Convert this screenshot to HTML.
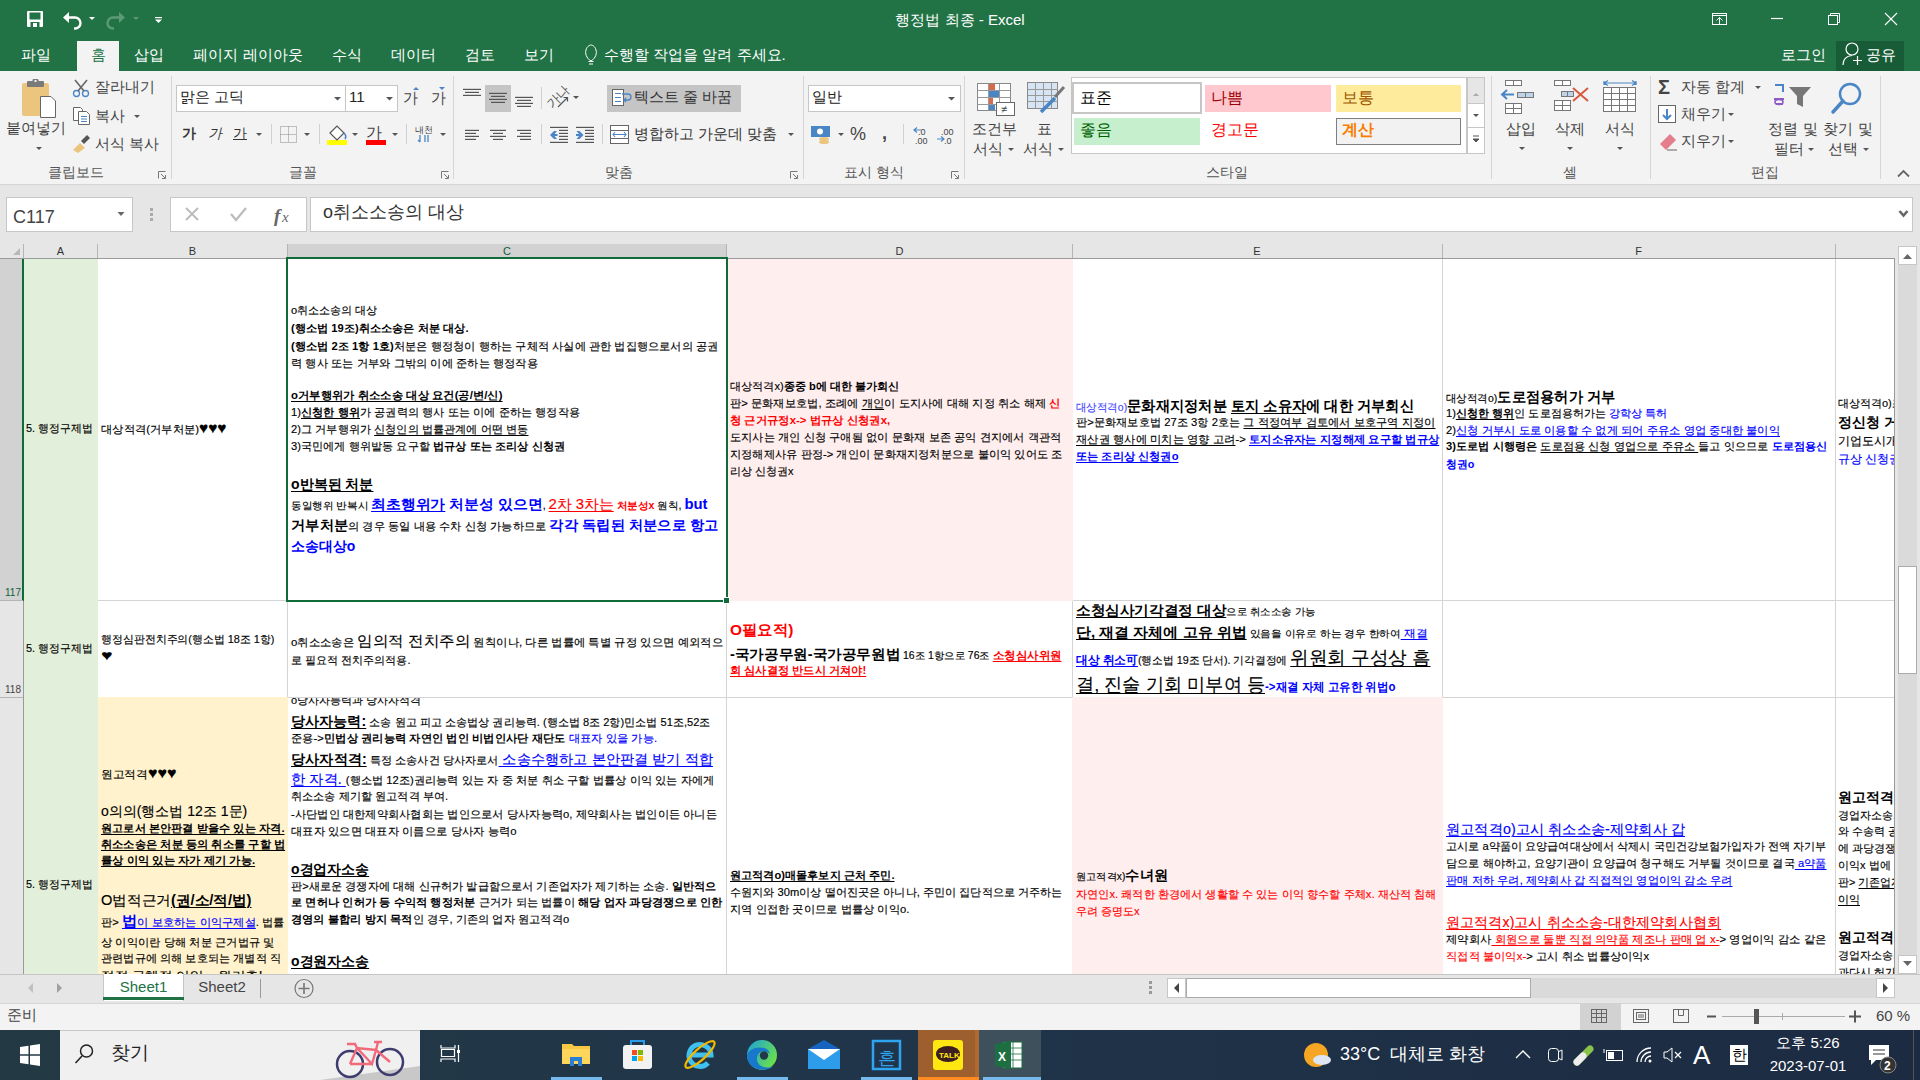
<!DOCTYPE html><html><head><meta charset="utf-8"><style>
*{box-sizing:border-box;margin:0;padding:0}
html,body{width:1920px;height:1080px;overflow:hidden;background:#fff;font-family:"Liberation Sans",sans-serif;color:#000}
.a{position:absolute}
.nw{white-space:nowrap}
.u{text-decoration:underline;text-decoration-thickness:1px;text-underline-offset:2px}
.b{font-weight:bold}
.bl{color:#0000FF}
.rd{color:#FF0000}
svg.i{position:absolute;overflow:visible}
.ln{position:absolute;white-space:nowrap;transform-origin:0 0;-webkit-text-stroke:0.15px currentColor}
.ln .b{-webkit-text-stroke:0}
</style></head><body>
<div class="a" style="left:0px;top:0px;width:1920px;height:71px;background:#217346"></div>
<svg class="i" style="left:0;top:0" width="200" height="40"><rect x="27" y="11" width="16" height="16" rx="1" fill="#fff"/><rect x="29.5" y="12.5" width="11" height="7" fill="#217346"/><rect x="30.5" y="22" width="9" height="5" fill="#217346"/><rect x="33" y="23" width="4" height="4" fill="#fff"/><path d="M66 17.5 H75 A5.5 5.5 0 0 1 75 28.5 H74" fill="none" stroke="#fff" stroke-width="2.4"/><path d="M63 17.5 L69 12 L69 23 Z" fill="#fff"/><path d="M89 17 L95 17 L92 20 Z" fill="#fff"/><path d="M122 17.5 H113 A5.5 5.5 0 0 0 113 28.5 H114" fill="none" stroke="#5a9a76" stroke-width="2.4"/><path d="M125 17.5 L119 12 L119 23 Z" fill="#5a9a76"/><path d="M133 17 L139 17 L136 20 Z" fill="#5a9a76"/><rect x="155" y="17" width="7" height="1.2" fill="#fff"/><path d="M155 19.5 L162 19.5 L158.5 23 Z" fill="#fff"/></svg>
<div class="a nw" style="left:0px;top:12.0px;font-size:15px;line-height:15px;color:#fff;width:1920px;text-align:center;left:0">행정법 최종 - Excel</div>
<svg class="i" style="left:0;top:0" width="1920" height="40"><rect x="1712.5" y="13.5" width="14" height="11" fill="none" stroke="#fff" stroke-width="1"/><line x1="1712.5" y1="15.5" x2="1726.5" y2="15.5" stroke="#fff"/><path d="M1716.5 20.5 L1719.5 17.5 L1722.5 20.5 M1719.5 17.5 V24.5" fill="none" stroke="#fff"/><line x1="1771" y1="18.5" x2="1783" y2="18.5" stroke="#fff" stroke-width="1.2"/><rect x="1828.5" y="15.5" width="9" height="9" fill="none" stroke="#fff"/><path d="M1830.5 15.5 V13.5 H1839.5 V22.5 H1837.5" fill="none" stroke="#fff"/><path d="M1885 13 L1897 25 M1897 13 L1885 25" stroke="#fff" stroke-width="1.1"/></svg>
<div class="a" style="left:77px;top:41px;width:42px;height:30px;background:#F3F3F3"></div>
<div class="a nw" style="left:-64px;width:200px;text-align:center;top:46px;font-size:15px;line-height:18px;color:#fff">파일</div>
<div class="a nw" style="left:-2px;width:200px;text-align:center;top:46px;font-size:15px;line-height:18px;color:#217346">홈</div>
<div class="a nw" style="left:49px;width:200px;text-align:center;top:46px;font-size:15px;line-height:18px;color:#fff">삽입</div>
<div class="a nw" style="left:148px;width:200px;text-align:center;top:46px;font-size:15px;line-height:18px;color:#fff">페이지 레이아웃</div>
<div class="a nw" style="left:247px;width:200px;text-align:center;top:46px;font-size:15px;line-height:18px;color:#fff">수식</div>
<div class="a nw" style="left:313px;width:200px;text-align:center;top:46px;font-size:15px;line-height:18px;color:#fff">데이터</div>
<div class="a nw" style="left:380px;width:200px;text-align:center;top:46px;font-size:15px;line-height:18px;color:#fff">검토</div>
<div class="a nw" style="left:439px;width:200px;text-align:center;top:46px;font-size:15px;line-height:18px;color:#fff">보기</div>
<svg class="i" style="left:0;top:0" width="620" height="71"><path d="M591 61 C586 58 585 53 586 50 C587 46 590 45 591 45 C592 45 595 46 596 50 C597 53 596 58 591 61" fill="none" stroke="#fff" stroke-width="1"/><path d="M588.5 61.5 H593.5 M589 64 H593" stroke="#fff" stroke-width="1"/></svg>
<div class="a nw" style="left:604px;top:46.0px;font-size:15px;line-height:15px;color:#fff;line-height:18px">수행할 작업을 알려 주세요.</div>
<div class="a nw" style="left:1781px;top:46.0px;font-size:15px;line-height:15px;color:#fff;line-height:18px">로그인</div>
<div class="a" style="left:1836px;top:41px;width:68px;height:30px;background:#185C37"></div>
<svg class="i" style="left:0;top:0" width="1920" height="71"><circle cx="1852" cy="49" r="6" fill="none" stroke="#fff" stroke-width="1.2"/><path d="M1843 65 C1843 59 1847 56 1852 55.5" fill="none" stroke="#fff" stroke-width="1.2"/><path d="M1857.5 56 V65 M1853 60.5 H1862" stroke="#fff" stroke-width="1.2"/></svg>
<div class="a nw" style="left:1866px;top:46.0px;font-size:15px;line-height:15px;color:#fff;line-height:18px">공유</div>
<div class="a" style="left:0px;top:71px;width:1920px;height:113px;background:#F3F3F3"></div>
<div class="a" style="left:0px;top:184px;width:1920px;height:1px;background:#D5D5D5"></div>
<div class="a" style="left:171px;top:76px;width:1px;height:103px;background:#D5D5D5"></div>
<div class="a" style="left:453px;top:76px;width:1px;height:103px;background:#D5D5D5"></div>
<div class="a" style="left:803px;top:76px;width:1px;height:103px;background:#D5D5D5"></div>
<div class="a" style="left:964px;top:76px;width:1px;height:103px;background:#D5D5D5"></div>
<div class="a" style="left:1491px;top:76px;width:1px;height:103px;background:#D5D5D5"></div>
<div class="a" style="left:1650px;top:76px;width:1px;height:103px;background:#D5D5D5"></div>
<div class="a" style="left:1880px;top:76px;width:1px;height:103px;background:#D5D5D5"></div>
<div class="a nw" style="left:-74px;width:300px;text-align:center;top:164px;font-size:14px;line-height:17px;color:#555">클립보드</div>
<div class="a nw" style="left:153px;width:300px;text-align:center;top:164px;font-size:14px;line-height:17px;color:#555">글꼴</div>
<div class="a nw" style="left:469px;width:300px;text-align:center;top:164px;font-size:14px;line-height:17px;color:#555">맞춤</div>
<div class="a nw" style="left:724px;width:300px;text-align:center;top:164px;font-size:14px;line-height:17px;color:#555">표시 형식</div>
<div class="a nw" style="left:1077px;width:300px;text-align:center;top:164px;font-size:14px;line-height:17px;color:#555">스타일</div>
<div class="a nw" style="left:1420px;width:300px;text-align:center;top:164px;font-size:14px;line-height:17px;color:#555">셀</div>
<div class="a nw" style="left:1615px;width:300px;text-align:center;top:164px;font-size:14px;line-height:17px;color:#555">편집</div>
<div class="a nw" style="left:6px;top:119px;font-size:15px;line-height:18px;color:#444444;">붙여넣기</div>
<div class="a nw" style="left:95px;top:78px;font-size:15px;line-height:18px;color:#444444;">잘라내기</div>
<div class="a nw" style="left:95px;top:107px;font-size:15px;line-height:18px;color:#444444;">복사</div>
<div class="a nw" style="left:95px;top:134.5px;font-size:15px;line-height:18px;color:#444444;">서식 복사</div>
<div class="a" style="left:176px;top:85px;width:170px;height:27px;background:#fff;border:1px solid #C6C6C6"></div>
<div class="a" style="left:345px;top:85px;width:53px;height:27px;background:#fff;border:1px solid #C6C6C6"></div>
<div class="a nw" style="left:180px;top:88px;font-size:15px;line-height:18px;color:#222;">맑은 고딕</div>
<div class="a nw" style="left:349px;top:88px;font-size:15px;line-height:18px;color:#222;">11</div>
<div class="a nw" style="left:403px;top:89px;font-size:15px;line-height:18px;color:#444;">가</div>
<div class="a nw" style="left:431px;top:89px;font-size:15px;line-height:18px;color:#444;">가</div>
<div class="a nw" style="left:182px;top:125px;font-size:14px;line-height:17px;color:#333;"><b>가</b></div>
<div class="a nw" style="left:208px;top:125px;font-size:14px;line-height:17px;color:#333;"><i>가</i></div>
<div class="a nw" style="left:233px;top:125px;font-size:14px;line-height:17px;color:#333;"><u>가</u></div>
<div class="a" style="left:271px;top:124px;width:1px;height:20px;background:#D0D0D0"></div>
<div class="a" style="left:319px;top:124px;width:1px;height:20px;background:#D0D0D0"></div>
<div class="a" style="left:327px;top:140px;width:20px;height:5px;background:#FFFF00"></div>
<div class="a nw" style="left:366px;top:123px;font-size:16px;line-height:19px;color:#444;">가</div>
<div class="a" style="left:366px;top:140px;width:20px;height:5px;background:#FF0000"></div>
<div class="a" style="left:406px;top:124px;width:1px;height:20px;background:#D0D0D0"></div>
<div class="a nw" style="left:415px;top:124px;font-size:9px;line-height:12px;color:#444;">내천</div>
<div class="a" style="left:485px;top:85px;width:26px;height:27px;background:#C5C5C5"></div>
<div class="a" style="left:541px;top:87px;width:1px;height:22px;background:#D0D0D0"></div>
<div class="a nw" style="left:545px;top:90px;font-size:13px;line-height:13px;color:#555;transform:rotate(-45deg);transform-origin:50% 50%;width:26px;text-align:center">가나</div>
<div class="a" style="left:607px;top:85px;width:134px;height:27px;background:#C5C5C5"></div>
<div class="a nw" style="left:634px;top:88px;font-size:15px;line-height:18px;color:#333;">텍스트 줄 바꿈</div>
<div class="a" style="left:541px;top:124px;width:1px;height:20px;background:#D0D0D0"></div>
<div class="a" style="left:602px;top:124px;width:1px;height:20px;background:#D0D0D0"></div>
<div class="a nw" style="left:634px;top:125px;font-size:15px;line-height:18px;color:#333;">병합하고 가운데 맞춤</div>
<div class="a" style="left:808px;top:85px;width:153px;height:27px;background:#fff;border:1px solid #C6C6C6"></div>
<div class="a nw" style="left:812px;top:88px;font-size:15px;line-height:18px;color:#222;">일반</div>
<div class="a nw" style="left:850px;top:124px;font-size:18px;line-height:21px;color:#444;">%</div>
<div class="a nw" style="left:882px;top:123px;font-size:18px;line-height:21px;color:#444;font-weight:bold">,</div>
<div class="a" style="left:903px;top:124px;width:1px;height:20px;background:#D0D0D0"></div>
<div class="a nw" style="left:918px;top:126px;font-size:9px;line-height:12px;color:#444;">.0</div>
<div class="a nw" style="left:915px;top:135px;font-size:9px;line-height:12px;color:#444;">.00</div>
<div class="a nw" style="left:941px;top:126px;font-size:9px;line-height:12px;color:#444;">.00</div>
<div class="a nw" style="left:944px;top:135px;font-size:9px;line-height:12px;color:#444;">.0</div>
<div class="a nw" style="left:844px;width:300px;text-align:center;top:120px;font-size:15px;line-height:18px;color:#444444">조건부</div>
<div class="a nw" style="left:973px;top:140px;font-size:15px;line-height:18px;color:#444444;">서식</div>
<div class="a nw" style="left:894px;width:300px;text-align:center;top:120px;font-size:15px;line-height:18px;color:#444444">표</div>
<div class="a nw" style="left:1023px;top:140px;font-size:15px;line-height:18px;color:#444444;">서식</div>
<div class="a" style="left:1071px;top:77px;width:396px;height:77px;background:#fff;border:1px solid #C6C6C6"></div>
<div class="a" style="left:1072px;top:82px;width:130px;height:32px;border:2px solid #C6C6C6;background:#fff"></div>
<div class="a nw" style="left:1080px;top:88px;font-size:16px;line-height:19px;color:#000;">표준</div>
<div class="a" style="left:1205px;top:85px;width:126px;height:27px;background:#FFC7CE"></div>
<div class="a nw" style="left:1211px;top:88px;font-size:16px;line-height:19px;color:#9C0006;">나쁨</div>
<div class="a" style="left:1336px;top:85px;width:125px;height:27px;background:#FFEB9C"></div>
<div class="a nw" style="left:1342px;top:88px;font-size:16px;line-height:19px;color:#9C5700;">보통</div>
<div class="a" style="left:1074px;top:118px;width:126px;height:27px;background:#C6EFCE"></div>
<div class="a nw" style="left:1080px;top:120px;font-size:16px;line-height:19px;color:#006100;">좋음</div>
<div class="a nw" style="left:1211px;top:120px;font-size:16px;line-height:19px;color:#FF0000;">경고문</div>
<div class="a" style="left:1336px;top:118px;width:125px;height:27px;background:#F2F2F2;border:1px solid #7F7F7F"></div>
<div class="a nw" style="left:1342px;top:120px;font-size:16px;line-height:19px;color:#FA7D00;"><b>계산</b></div>
<div class="a" style="left:1467px;top:77px;width:18px;height:77px;background:#fff;border:1px solid #C6C6C6"></div>
<div class="a" style="left:1467px;top:77px;width:18px;height:27px;background:#E6E6E6;border:1px solid #C6C6C6"></div>
<div class="a" style="left:1467px;top:127px;width:18px;height:1px;background:#C6C6C6"></div>
<div class="a nw" style="left:1371px;width:300px;text-align:center;top:120px;font-size:15px;line-height:18px;color:#444444">삽입</div>
<div class="a nw" style="left:1420px;width:300px;text-align:center;top:120px;font-size:15px;line-height:18px;color:#444444">삭제</div>
<div class="a" style="left:1612px;top:94px;width:8px;height:11px;background:#4A86C5"></div>
<div class="a nw" style="left:1470px;width:300px;text-align:center;top:120px;font-size:15px;line-height:18px;color:#444444">서식</div>
<div class="a nw" style="left:1658px;top:76px;font-size:20px;line-height:23px;color:#444;font-weight:bold">Σ</div>
<div class="a nw" style="left:1681px;top:78px;font-size:15px;line-height:18px;color:#444444;">자동 합계</div>
<div class="a nw" style="left:1681px;top:105px;font-size:15px;line-height:18px;color:#444444;">채우기</div>
<div class="a nw" style="left:1681px;top:132px;font-size:15px;line-height:18px;color:#444444;">지우기</div>
<div class="a nw" style="left:1643px;width:300px;text-align:center;top:120px;font-size:15px;line-height:18px;color:#444444">정렬 및</div>
<div class="a nw" style="left:1774px;top:140px;font-size:15px;line-height:18px;color:#444444;">필터</div>
<div class="a nw" style="left:1698px;width:300px;text-align:center;top:120px;font-size:15px;line-height:18px;color:#444444">찾기 및</div>
<div class="a nw" style="left:1828px;top:140px;font-size:15px;line-height:18px;color:#444444;">선택</div>
<svg class="i" style="left:0;top:0" width="1920" height="190"><path d="M158.5 178.5 V171.5 H165.5" fill="none" stroke="#777"/><path d="M161 174 L165 178 M162 178.5 H165.5 V175" fill="none" stroke="#777"/><path d="M441.5 178.5 V171.5 H448.5" fill="none" stroke="#777"/><path d="M444 174 L448 178 M445 178.5 H448.5 V175" fill="none" stroke="#777"/><path d="M790.5 178.5 V171.5 H797.5" fill="none" stroke="#777"/><path d="M793 174 L797 178 M794 178.5 H797.5 V175" fill="none" stroke="#777"/><path d="M951.5 178.5 V171.5 H958.5" fill="none" stroke="#777"/><path d="M954 174 L958 178 M955 178.5 H958.5 V175" fill="none" stroke="#777"/><rect x="22" y="83" width="27" height="33" rx="2" fill="#EBC57D"/><rect x="27" y="81" width="17" height="6" rx="1" fill="#7A7A7A"/><rect x="32.5" y="79" width="6" height="4" rx="1" fill="#7A7A7A"/><rect x="34.5" y="80" width="2" height="2" fill="#F3F3F3"/><path d="M40.5 96.5 H51 L55.5 101 V117.5 H40.5 Z" fill="#fff" stroke="#666"/><path d="M36 147 L42 147 L39 150 Z" fill="#555"/><circle cx="76.5" cy="93.5" r="3" fill="none" stroke="#4A86C5" stroke-width="1.3"/><circle cx="85.5" cy="93.5" r="3" fill="none" stroke="#4A86C5" stroke-width="1.3"/><path d="M75 80 L84 91 M87 80 L78 91" stroke="#666" stroke-width="1.6"/><path d="M73.5 107.5 H80.5 L82.5 109.5 V120.5 H73.5 Z" fill="#fff" stroke="#666"/><path d="M78.5 111.5 H86.5 L89.5 114.5 V124.5 H78.5 Z" fill="#fff" stroke="#666"/><path d="M81 116.5 H87 M81 119 H87 M81 121.5 H87" stroke="#4A86C5"/><path d="M134 115 L140 115 L137 118 Z" fill="#555"/><path d="M73 150 L80 143 L85 148 L78 153 Z" fill="#EBC57D"/><path d="M81 141 L87 135 L90 138 L84 144 Z" fill="#555"/><path d="M334 97 L341 97 L337.5 100.5 Z" fill="#555"/><path d="M386 97 L393 97 L389.5 100.5 Z" fill="#555"/><path d="M413 90 L416 87 L419 90 Z" fill="#4A86C5"/><path d="M439 87 L445 87 L442 90 Z" fill="#4A86C5"/><path d="M256 133 L262 133 L259 136 Z" fill="#555"/><rect x="280.5" y="126.5" width="16" height="16" fill="none" stroke="#888" stroke-dasharray="1 1"/><path d="M288.5 126.5 V142.5 M280.5 134.5 H296.5" stroke="#888" stroke-dasharray="1 1"/><path d="M304 133 L310 133 L307 136 Z" fill="#555"/><path d="M330 133 L337 126 L344 133 L337 140 Z" fill="#fff" stroke="#555" stroke-width="1.2"/><path d="M344 133 Q347 136 345 139" fill="none" stroke="#4A86C5" stroke-width="1.6"/><path d="M352 133 L358 133 L355 136 Z" fill="#555"/><path d="M392 133 L398 133 L395 136 Z" fill="#555"/><path d="M420 135 V142 M425 135 V142 M428 135 V142 M418 140 L420 142" stroke="#4A86C5" stroke-width="1.3" fill="none"/><path d="M440 133 L446 133 L443 136 Z" fill="#555"/><rect x="463" y="88.8" width="18" height="1.2" fill="#555"/><rect x="465" y="91.8" width="14" height="1.2" fill="#555"/><rect x="463" y="94.8" width="18" height="1.2" fill="#555"/><rect x="489" y="92.8" width="18" height="1.2" fill="#555"/><rect x="491" y="95.8" width="14" height="1.2" fill="#555"/><rect x="489" y="98.8" width="18" height="1.2" fill="#555"/><rect x="491" y="101.8" width="14" height="1.2" fill="#555"/><rect x="515" y="96.8" width="18" height="1.2" fill="#555"/><rect x="517" y="99.8" width="14" height="1.2" fill="#555"/><rect x="515" y="102.8" width="18" height="1.2" fill="#555"/><rect x="517" y="105.8" width="14" height="1.2" fill="#555"/><path d="M558 107 L567.5 97.5 M563.5 97.5 H567.5 V101.5" fill="none" stroke="#555" stroke-width="1.2"/><path d="M573 96 L579 96 L576 99 Z" fill="#555"/><rect x="612.5" y="89.5" width="11" height="16" fill="#fff" stroke="#666"/><path d="M615 93.5 H621 M615 97.5 H621 M615 101.5 H621" stroke="#4A86C5"/><path d="M622 94 H628 A3 3 0 0 1 628 100 H624 M626 98 L624 100 L626 102" fill="none" stroke="#4A86C5" stroke-width="1.3"/><rect x="465" y="129.8" width="14" height="1.2" fill="#555"/><rect x="465" y="132.8" width="11" height="1.2" fill="#555"/><rect x="465" y="135.8" width="14" height="1.2" fill="#555"/><rect x="465" y="138.8" width="11" height="1.2" fill="#555"/><rect x="490" y="129.8" width="16" height="1.2" fill="#555"/><rect x="493" y="132.8" width="10" height="1.2" fill="#555"/><rect x="490" y="135.8" width="16" height="1.2" fill="#555"/><rect x="493" y="138.8" width="10" height="1.2" fill="#555"/><rect x="517" y="129.8" width="14" height="1.2" fill="#555"/><rect x="520" y="132.8" width="11" height="1.2" fill="#555"/><rect x="517" y="135.8" width="14" height="1.2" fill="#555"/><rect x="520" y="138.8" width="11" height="1.2" fill="#555"/><rect x="550" y="126.8" width="18" height="1.2" fill="#555"/><rect x="559" y="129.8" width="9" height="1.2" fill="#555"/><rect x="559" y="132.8" width="9" height="1.2" fill="#555"/><rect x="559" y="135.8" width="9" height="1.2" fill="#555"/><rect x="559" y="138.8" width="9" height="1.2" fill="#555"/><rect x="550" y="141.8" width="18" height="1.2" fill="#555"/><path d="M550 135 L554 131 H557 L554.5 134 H557.5 V136 H554.5 L557 139 H554 Z" fill="#4A86C5"/><rect x="576" y="126.8" width="18" height="1.2" fill="#555"/><rect x="585" y="129.8" width="9" height="1.2" fill="#555"/><rect x="585" y="132.8" width="9" height="1.2" fill="#555"/><rect x="585" y="135.8" width="9" height="1.2" fill="#555"/><rect x="585" y="138.8" width="9" height="1.2" fill="#555"/><rect x="576" y="141.8" width="18" height="1.2" fill="#555"/><path d="M583.5 135 L579.5 131 H576.5 L579 134 H576 V136 H579 L576.5 139 H579.5 Z" fill="#4A86C5"/><rect x="610.5" y="125.5" width="18" height="18" fill="#fff" stroke="#666"/><path d="M610.5 130.5 H628.5 M610.5 138.5 H628.5" stroke="#666"/><path d="M613 134.5 H626 M615 132 L613 134.5 L615 137 M624 132 L626 134.5 L624 137" fill="none" stroke="#4A86C5" stroke-width="1.1"/><path d="M788 133 L794 133 L791 136 Z" fill="#555"/><path d="M948 97 L955 97 L951.5 100.5 Z" fill="#555"/><rect x="811" y="126" width="19" height="11" fill="#4A86C5"/><circle cx="820" cy="131.5" r="3" fill="#fff"/><ellipse cx="824" cy="139" rx="5" ry="2" fill="#EBC57D"/><ellipse cx="824" cy="142" rx="5" ry="2" fill="#EBC57D"/><path d="M838 133 L844 133 L841 136 Z" fill="#555"/><path d="M914 130 H921 M917 127.5 L914 130 L917 132.5" fill="none" stroke="#4A86C5" stroke-width="1.2"/><path d="M937 139 H944 M941 136.5 L944 139 L941 141.5" fill="none" stroke="#4A86C5" stroke-width="1.2"/><rect x="977.5" y="83.5" width="33" height="27" fill="#fff" stroke="#888"/><path d="M977.5 90.5 H1010.5 M977.5 97.5 H1010.5 M977.5 104.5 H1010.5 M988.5 83.5 V110.5 M999.5 83.5 V110.5" stroke="#999"/><rect x="989" y="84" width="6" height="6" fill="#D86B4C"/><rect x="989" y="91" width="10" height="6" fill="#4A86C5"/><rect x="989" y="98" width="4" height="6" fill="#D86B4C"/><rect x="989" y="105" width="6" height="5" fill="#4A86C5"/><rect x="996.5" y="102.5" width="18" height="13" fill="#fff" stroke="#666"/><text x="1001" y="113" font-size="11" fill="#444">≠</text><path d="M1008 148 L1014 148 L1011 151 Z" fill="#555"/><rect x="1027.5" y="82.5" width="30" height="26" fill="#D7E4F3" stroke="#888"/><path d="M1027.5 89.5 H1057.5 M1027.5 95.5 H1057.5 M1027.5 101.5 H1057.5 M1035.5 82.5 V108.5 M1043.5 82.5 V108.5 M1051.5 82.5 V108.5" stroke="#999"/><path d="M1041 112 L1055 98" stroke="#4A86C5" stroke-width="3.5"/><path d="M1055 97 L1064 87" stroke="#777" stroke-width="3"/><path d="M1058 148 L1064 148 L1061 151 Z" fill="#555"/><path d="M1473 96 L1479 96 L1476 93 Z" fill="#aaa"/><path d="M1473 114 L1479 114 L1476 117 Z" fill="#555"/><path d="M1473 136 H1479 M1473 139 L1479 139 L1476 142 Z" stroke="#555" fill="#555"/><rect x="1505.5" y="80.5" width="8" height="5" fill="#fff" stroke="#777"/><rect x="1513.5" y="80.5" width="8" height="5" fill="#fff" stroke="#777"/><rect x="1505.5" y="103.5" width="8" height="5" fill="#fff" stroke="#777"/><rect x="1513.5" y="103.5" width="8" height="5" fill="#fff" stroke="#777"/><rect x="1505.5" y="108.5" width="8" height="5" fill="#fff" stroke="#777"/><rect x="1513.5" y="108.5" width="8" height="5" fill="#fff" stroke="#777"/><rect x="1517.5" y="92.5" width="8" height="5" fill="#BDD3EA" stroke="#777"/><rect x="1525.5" y="92.5" width="8" height="5" fill="#BDD3EA" stroke="#777"/><path d="M1502 94.5 H1514 M1507 90 L1502 94.5 L1507 99" fill="none" stroke="#4A86C5" stroke-width="2"/><path d="M1519 147 L1525 147 L1522 150 Z" fill="#555"/><rect x="1554.5" y="80.5" width="8" height="5" fill="#fff" stroke="#777"/><rect x="1562.5" y="80.5" width="8" height="5" fill="#fff" stroke="#777"/><rect x="1554.5" y="100.5" width="8" height="5" fill="#fff" stroke="#777"/><rect x="1562.5" y="100.5" width="8" height="5" fill="#fff" stroke="#777"/><rect x="1554.5" y="105.5" width="8" height="5" fill="#fff" stroke="#777"/><rect x="1562.5" y="105.5" width="8" height="5" fill="#fff" stroke="#777"/><rect x="1561.5" y="91.5" width="6" height="5" fill="#BDD3EA" stroke="#777"/><rect x="1567.5" y="91.5" width="6" height="5" fill="#BDD3EA" stroke="#777"/><path d="M1573 88 L1588 101 M1588 88 L1573 101" stroke="#D85A3C" stroke-width="2"/><path d="M1567 147 L1573 147 L1570 150 Z" fill="#555"/><path d="M1604 81 V85 M1636 81 V85 M1604 83 H1636 M1608 80.5 L1604 83 L1608 85.5 M1632 80.5 L1636 83 L1632 85.5" fill="none" stroke="#4A86C5" stroke-width="1.2"/><rect x="1603.5" y="87.5" width="8" height="6" fill="#fff" stroke="#777"/><rect x="1611.5" y="87.5" width="8" height="6" fill="#fff" stroke="#777"/><rect x="1619.5" y="87.5" width="8" height="6" fill="#fff" stroke="#777"/><rect x="1627.5" y="87.5" width="8" height="6" fill="#fff" stroke="#777"/><rect x="1603.5" y="93.5" width="8" height="6" fill="#fff" stroke="#777"/><rect x="1611.5" y="93.5" width="8" height="6" fill="#fff" stroke="#777"/><rect x="1619.5" y="93.5" width="8" height="6" fill="#fff" stroke="#777"/><rect x="1627.5" y="93.5" width="8" height="6" fill="#fff" stroke="#777"/><rect x="1603.5" y="99.5" width="8" height="6" fill="#fff" stroke="#777"/><rect x="1611.5" y="99.5" width="8" height="6" fill="#fff" stroke="#777"/><rect x="1619.5" y="99.5" width="8" height="6" fill="#fff" stroke="#777"/><rect x="1627.5" y="99.5" width="8" height="6" fill="#fff" stroke="#777"/><rect x="1603.5" y="105.5" width="8" height="6" fill="#fff" stroke="#777"/><rect x="1611.5" y="105.5" width="8" height="6" fill="#fff" stroke="#777"/><rect x="1619.5" y="105.5" width="8" height="6" fill="#fff" stroke="#777"/><rect x="1627.5" y="105.5" width="8" height="6" fill="#fff" stroke="#777"/><path d="M1617 147 L1623 147 L1620 150 Z" fill="#555"/><path d="M1755 86 L1761 86 L1758 89 Z" fill="#555"/><rect x="1658.5" y="105.5" width="17" height="17" fill="#fff" stroke="#666"/><path d="M1667 109 V119 M1663 115 L1667 119 L1671 115" fill="none" stroke="#4A86C5" stroke-width="2"/><path d="M1728 113 L1734 113 L1731 116 Z" fill="#555"/><path d="M1660 144 L1670 134 L1676 140 L1666 150 Z" fill="#E57E8C"/><path d="M1667 150 H1677" stroke="#666"/><path d="M1728 140 L1734 140 L1731 143 Z" fill="#555"/><path d="M1775 85 H1783 V92" fill="none" stroke="#4A86C5" stroke-width="2"/><path d="M1774 99 H1784 M1776 104 H1783" stroke="#8E5BC4" stroke-width="2"/><ellipse cx="1779" cy="102" rx="4" ry="2.5" fill="none" stroke="#8E5BC4" stroke-width="1.6"/><path d="M1789 87 H1811 L1803 96 V107 L1797 104 V96 Z" fill="#777"/><path d="M1808 148 L1814 148 L1811 151 Z" fill="#555"/><circle cx="1850" cy="94" r="10" fill="none" stroke="#4A86C5" stroke-width="2.5"/><path d="M1843 101 L1833 112" stroke="#4A86C5" stroke-width="3.5" stroke-linecap="round"/><path d="M1863 148 L1869 148 L1866 151 Z" fill="#555"/><path d="M1898 176.5 L1903.5 171 L1909 176.5" fill="none" stroke="#666" stroke-width="1.8"/></svg>
<div class="a" style="left:0px;top:185px;width:1920px;height:59px;background:#E6E6E6"></div>
<div class="a" style="left:6px;top:197px;width:127px;height:35px;background:#fff;border:1px solid #C6C6C6"></div>
<div class="a nw" style="left:13px;top:207px;font-size:18px;line-height:21px;color:#444;">C117</div>
<div class="a" style="left:170px;top:197px;width:137px;height:35px;background:#fff;border:1px solid #C6C6C6"></div>
<div class="a" style="left:310px;top:197px;width:1603px;height:35px;background:#fff;border:1px solid #C6C6C6"></div>
<svg class="i" style="left:0;top:0" width="1920" height="250"><path d="M117.5 212 L124.5 212 L121 216 Z" fill="#666"/><rect x="150" y="208" width="3" height="3" fill="#AAA"/><rect x="150" y="213" width="3" height="3" fill="#AAA"/><rect x="150" y="218" width="3" height="3" fill="#AAA"/><path d="M186 208 L198 220 M198 208 L186 220" stroke="#BBB" stroke-width="1.8"/><path d="M231 214 L236 220 L246 208" fill="none" stroke="#BBB" stroke-width="2.2"/><text x="274" y="222" font-family="Liberation Serif" font-style="italic" font-weight="bold" font-size="19" fill="#666">f</text><text x="282" y="222" font-family="Liberation Serif" font-style="italic" font-size="15" fill="#666">x</text><path d="M1899.5 211 L1903.5 215.5 L1907.5 211" fill="none" stroke="#666" stroke-width="2.6"/></svg>
<div class="a nw" style="left:323px;top:203.2px;font-size:18px;line-height:18px;color:#333;">o취소소송의 대상</div>
<div class="a" style="left:0px;top:244px;width:1895px;height:15px;background:#E6E6E6"></div>
<div class="a" style="left:287px;top:244px;width:440px;height:14px;background:#D2D2D2"></div>
<div class="a nw" style="left:23px;width:75px;text-align:center;top:245px;font-size:11px;line-height:13px;color:#333">A</div>
<div class="a nw" style="left:98px;width:189px;text-align:center;top:245px;font-size:11px;line-height:13px;color:#333">B</div>
<div class="a nw" style="left:287px;width:440px;text-align:center;top:245px;font-size:11px;line-height:13px;color:#0F5F33">C</div>
<div class="a nw" style="left:727px;width:345px;text-align:center;top:245px;font-size:11px;line-height:13px;color:#333">D</div>
<div class="a nw" style="left:1072px;width:370px;text-align:center;top:245px;font-size:11px;line-height:13px;color:#333">E</div>
<div class="a nw" style="left:1442px;width:393px;text-align:center;top:245px;font-size:11px;line-height:13px;color:#333">F</div>
<div class="a" style="left:23px;top:244px;width:1px;height:14px;background:#B5B5B5"></div>
<div class="a" style="left:97px;top:244px;width:1px;height:14px;background:#B5B5B5"></div>
<div class="a" style="left:287px;top:244px;width:1px;height:14px;background:#B5B5B5"></div>
<div class="a" style="left:726px;top:244px;width:1px;height:14px;background:#B5B5B5"></div>
<div class="a" style="left:1072px;top:244px;width:1px;height:14px;background:#B5B5B5"></div>
<div class="a" style="left:1442px;top:244px;width:1px;height:14px;background:#B5B5B5"></div>
<div class="a" style="left:1835px;top:244px;width:1px;height:14px;background:#B5B5B5"></div>
<div class="a" style="left:0px;top:258px;width:1895px;height:1px;background:#9B9B9B"></div>
<svg class="i" style="left:0;top:0" width="30" height="260"><path d="M20 248 L20 255 L13 255 Z" fill="#B8B8B8"/></svg>
<div class="a" style="left:0px;top:259px;width:1895px;height:715px;background:#fff"></div>
<div class="a" style="left:0px;top:259px;width:23px;height:715px;background:#E6E6E6"></div>
<div class="a" style="left:0px;top:259px;width:22px;height:341px;background:#D2D2D2"></div>
<div class="a" style="left:23px;top:259px;width:1px;height:715px;background:#9B9B9B"></div>
<div class="a" style="left:22px;top:259px;width:2px;height:342px;background:#0F6B37"></div>
<div class="a" style="left:0px;top:600px;width:23px;height:1px;background:#B5B5B5"></div>
<div class="a nw" style="left:0;width:21px;text-align:right;top:587px;font-size:10px;line-height:12px;color:#0F5F33">117</div>
<div class="a" style="left:0px;top:697px;width:23px;height:1px;background:#B5B5B5"></div>
<div class="a nw" style="left:0;width:21px;text-align:right;top:684px;font-size:10px;line-height:12px;color:#444">118</div>
<div class="a" style="left:0px;top:974px;width:23px;height:1px;background:#B5B5B5"></div>
<div class="a" style="left:287px;top:259px;width:1px;height:715px;background:#D4D4D4"></div>
<div class="a" style="left:726px;top:259px;width:1px;height:715px;background:#D4D4D4"></div>
<div class="a" style="left:1072px;top:259px;width:1px;height:715px;background:#D4D4D4"></div>
<div class="a" style="left:1442px;top:259px;width:1px;height:715px;background:#D4D4D4"></div>
<div class="a" style="left:1835px;top:259px;width:1px;height:715px;background:#D4D4D4"></div>
<div class="a" style="left:24px;top:600px;width:1871px;height:1px;background:#D4D4D4"></div>
<div class="a" style="left:24px;top:697px;width:1871px;height:1px;background:#D4D4D4"></div>
<div class="a" style="left:24px;top:259px;width:74px;height:715px;background:#E2EFDA"></div>
<div class="a" style="left:98px;top:697px;width:190px;height:277px;background:#FFF2CC"></div>
<div class="a" style="left:727px;top:259px;width:346px;height:342px;background:#FFEEEE"></div>
<div class="a" style="left:1072px;top:697px;width:371px;height:277px;background:#FFEEEE"></div>
<div class="a" style="left:1894px;top:259px;width:1px;height:715px;background:#9B9B9B"></div>
<div class="a" style="left:1895px;top:244px;width:25px;height:730px;background:#E6E6E6"></div>
<div class="a" style="left:24px;top:259px;width:73px;height:715px;overflow:hidden">
<div class="ln" id="L0" style="left:2px;top:163.90px;font-size:11px;line-height:11px;transform:scaleX(0.9891);">5. 행정구제법</div>
<div class="ln" id="L1" style="left:2px;top:384.40px;font-size:11px;line-height:11px;transform:scaleX(0.9891);">5. 행정구제법</div>
<div class="ln" id="L2" style="left:2px;top:620.40px;font-size:11px;line-height:11px;transform:scaleX(0.9891);">5. 행정구제법</div>
</div>
<div class="a" style="left:98px;top:259px;width:188px;height:341px;overflow:hidden">
<div class="ln" id="L3" style="left:3px;top:162.90px;font-size:11px;line-height:11px;transform:scaleX(1.0283);">대상적격(거부처분)<span style="font-size:15px;">♥♥♥</span></div>
</div>
<div class="a" style="left:98px;top:601px;width:188px;height:96px;overflow:hidden">
<div class="ln" id="L4" style="left:3px;top:33.40px;font-size:11px;line-height:11px;transform:scaleX(0.9926);">행정심판전치주의(행소법 18조 1항)</div>
<div class="ln" id="L5" style="left:3px;top:49.40px;font-size:11px;line-height:11px;transform:scaleX(1.3835);"><span style="font-size:14px;">♥</span></div>
</div>
<div class="a" style="left:98px;top:698px;width:188px;height:276px;overflow:hidden">
<div class="ln" id="L6" style="left:3px;top:68.90px;font-size:11px;line-height:11px;transform:scaleX(1.0676);">원고적격<span style="font-size:15px;">♥♥♥</span></div>
<div class="ln" id="L7" style="left:3px;top:105.60px;font-size:14px;line-height:14px;">o의의(행소법 12조 1문)</div>
<div class="ln" id="L8" style="left:3px;top:125.20px;font-size:11px;line-height:11px;transform:scaleX(1.0179);"><span class="b u">원고로서 본안판결 받을수 있는 자격.</span></div>
<div class="ln" id="L9" style="left:3px;top:141.30px;font-size:11px;line-height:11px;transform:scaleX(1.0212);"><span class="b u">취소소송은 처분 등의 취소를 구할 법</span></div>
<div class="ln" id="L10" style="left:3px;top:157.40px;font-size:11px;line-height:11px;transform:scaleX(1.0250);"><span class="b u">률상 이익 있는 자가 제기 가능.</span></div>
<div class="ln" id="L11" style="left:3px;top:194.60px;font-size:14px;line-height:14px;transform:scaleX(1.0459);">O법적근거<span class="b u">(권/소/적/법)</span></div>
<div class="ln" id="L12" style="left:3px;top:216.50px;font-size:11px;line-height:11px;transform:scaleX(1.0210);">판&gt; <span class="bl u b" style="font-size:15px;">법</span><span class="bl u">이 보호하는 이익구제설</span>. 법률</div>
<div class="ln" id="L13" style="left:3px;top:239.30px;font-size:11px;line-height:11px;transform:scaleX(1.0249);">상 이익이란 당해 처분 근거법규 및</div>
<div class="ln" id="L14" style="left:3px;top:255.40px;font-size:11px;line-height:11px;transform:scaleX(1.0162);">관련법규에 의해 보호되는 개별적 직</div>
<div class="ln" id="L15" style="left:3px;top:271.50px;font-size:11px;line-height:11px;transform:scaleX(1.2290);">접적 구체적 이익... 원리추!</div>
</div>
<div class="a" style="left:287px;top:259px;width:439px;height:341px;overflow:hidden">
<div class="ln" id="L16" style="left:4px;top:46.20px;font-size:11px;line-height:11px;transform:scaleX(1.0036);">o취소소송의 대상</div>
<div class="ln" id="L17" style="left:4px;top:63.90px;font-size:11px;line-height:11px;transform:scaleX(1.0155);"><span class="b">(행소법 19조)취소소송은 처분 대상.</span></div>
<div class="ln" id="L18" style="left:4px;top:81.60px;font-size:11px;line-height:11px;transform:scaleX(1.0196);"><span class="b">(행소법 2조 1항 1호)</span>처분은 행정청이 행하는 구체적 사실에 관한 법집행으로서의 공권</div>
<div class="ln" id="L19" style="left:4px;top:98.90px;font-size:11px;line-height:11px;transform:scaleX(1.0232);">력 행사 또는 거부와 그밖의 이에 준하는 행정작용</div>
<div class="ln" id="L20" style="left:4px;top:130.90px;font-size:11px;line-height:11px;transform:scaleX(1.0301);"><span class="b u">o거부행위가 취소소송 대상 요건(공/변/신)</span></div>
<div class="ln" id="L21" style="left:4px;top:147.90px;font-size:11px;line-height:11px;transform:scaleX(1.0169);">1)<span class="b u">신청한 행위</span>가 공권력의 행사 또는 이에 준하는 행정작용</div>
<div class="ln" id="L22" style="left:4px;top:164.90px;font-size:11px;line-height:11px;transform:scaleX(1.0146);">2)그 거부행위가 <span class="u">신청인의 법률관계에 어떤 변동</span></div>
<div class="ln" id="L23" style="left:4px;top:181.90px;font-size:11px;line-height:11px;transform:scaleX(1.0147);">3)국민에게 행위발동 요구할 <span class="b">법규상 또는 조리상 신청권</span></div>
<div class="ln" id="L24" style="left:4px;top:217.60px;font-size:14px;line-height:14px;"><span class="b u">o반복된 처분</span></div>
<div class="ln" id="L25" style="left:4px;top:237.60px;font-size:14px;line-height:14px;transform:scaleX(1.0603);"><span style="font-size:10px;">동일행위 반복시 </span><span class="bl u b" style="font-size:14px;">최초행위가</span><span class="bl b" style="font-size:14px;"> 처분성 있으면</span><span style="font-size:10px;">, </span><span class="rd u" style="font-size:14px;">2차 3차는</span><span class="rd b" style="font-size:10px;"> 처분성x</span><span style="font-size:10px;"> 원칙, </span><span class="bl b" style="font-size:14px;">but</span></div>
<div class="ln" id="L26" style="left:4px;top:258.90px;font-size:14px;line-height:14px;transform:scaleX(1.0201);"><span class="b" style="font-size:14px;">거부처분</span><span style="font-size:11px;">의 경우 동일 내용 수차 신청 가능하므로 </span><span class="bl b" style="font-size:14px;">각각 독립된 처분으로 항고</span></div>
<div class="ln" id="L27" style="left:4px;top:280.00px;font-size:14px;line-height:14px;transform:scaleX(0.9944);"><span class="bl b">소송대상o</span></div>
</div>
<div class="a" style="left:287px;top:601px;width:439px;height:96px;overflow:hidden">
<div class="ln" id="L28" style="left:4px;top:33.90px;font-size:11px;line-height:11px;transform:scaleX(1.0340);"><span style="font-size:11px;">o취소소송은 </span><span style="font-size:15px;">임의적 전치주의</span><span style="font-size:11px;"> 원칙이나, 다른 법률에 특별 규정 있으면 예외적으</span></div>
<div class="ln" id="L29" style="left:4px;top:54.20px;font-size:11px;line-height:11px;transform:scaleX(1.0028);">로 필요적 전치주의적용.</div>
</div>
<div class="a" style="left:287px;top:698px;width:439px;height:276px;overflow:hidden">
<div class="ln" id="L30" style="left:4px;top:-2.60px;font-size:11px;line-height:11px;transform:scaleX(1.0024);">o당사자능력과 당사자적격</div>
<div class="ln" id="L31" style="left:4px;top:18.15px;font-size:11px;line-height:11px;transform:scaleX(1.0076);"><span class="b u" style="font-size:14px;">당사자능력:</span><span style="font-size:11px;"> 소송 원고 피고 소송법상 권리능력. (행소법 8조 2항)민소법 51조,52조</span></div>
<div class="ln" id="L32" style="left:4px;top:35.20px;font-size:11px;line-height:11px;transform:scaleX(1.0266);">준용-&gt;<span class="b">민법상 권리능력 자연인 법인 비법인사단 재단도 </span><span class="bl">대표자 있을 가능.</span></div>
<div class="ln" id="L33" style="left:4px;top:55.95px;font-size:11px;line-height:11px;transform:scaleX(1.0132);"><span class="b u" style="font-size:14px;">당사자적격:</span><span style="font-size:11px;"> 특정 소송사건 당사자로서</span><span class="bl u" style="font-size:14px;"> 소송수행하고 본안판결 받기 적합</span></div>
<div class="ln" id="L34" style="left:4px;top:75.75px;font-size:11px;line-height:11px;transform:scaleX(1.0208);"><span class="bl u" style="font-size:14px;">한 자격. </span><span style="font-size:11px;">(행소법 12조)권리능력 있는 자 중 처분 취소 구할 법률상 이익 있는 자에게</span></div>
<div class="ln" id="L35" style="left:4px;top:92.70px;font-size:11px;line-height:11px;transform:scaleX(1.0127);">취소소송 제기할 원고적격 부여.</div>
<div class="ln" id="L36" style="left:4px;top:110.70px;font-size:11px;line-height:11px;transform:scaleX(1.0236);">-사단법인 대한제약회사협회는 법인으로서 당사자능력o,  제약회사는 법인이든 아니든</div>
<div class="ln" id="L37" style="left:4px;top:127.50px;font-size:11px;line-height:11px;transform:scaleX(1.0278);">대표자 있으면 대표자 이름으로 당사자 능력o</div>
<div class="ln" id="L38" style="left:4px;top:163.60px;font-size:14px;line-height:14px;transform:scaleX(0.9941);"><span class="b u">o경업자소송</span></div>
<div class="ln" id="L39" style="left:4px;top:183.20px;font-size:11px;line-height:11px;transform:scaleX(1.0157);">판&gt;새로운 경쟁자에 대해 신규허가 발급함으로서 기존업자가 제기하는 소송. <span class="b">일반적으</span></div>
<div class="ln" id="L40" style="left:4px;top:198.90px;font-size:11px;line-height:11px;transform:scaleX(1.0233);"><span class="b">로 면허나 인허가 등 수익적 행정처분</span> 근거가 되는 법률이 <span class="b">해당 업자 과당경쟁으로 인한</span></div>
<div class="ln" id="L41" style="left:4px;top:215.60px;font-size:11px;line-height:11px;transform:scaleX(1.0206);"><span class="b">경영의 불합리 방지 목적</span>인 경우, 기존의 업자 원고적격o</div>
<div class="ln" id="L42" style="left:4px;top:256.00px;font-size:14px;line-height:14px;transform:scaleX(0.9941);"><span class="b u">o경원자소송</span></div>
</div>
<div class="a" style="left:727px;top:259px;width:344px;height:341px;overflow:hidden">
<div class="ln" id="L43" style="left:3px;top:122.20px;font-size:11px;line-height:11px;transform:scaleX(1.0086);">대상적격x)<span class="b">종중 b에 대한 불가회신</span></div>
<div class="ln" id="L44" style="left:3px;top:138.70px;font-size:11px;line-height:11px;transform:scaleX(1.0232);">판&gt; 문화재보호법, 조례에 <span class="u">개인</span>이 도지사에 대해 지정 취소 해제 <span class="rd b">신</span></div>
<div class="ln" id="L45" style="left:3px;top:155.80px;font-size:11px;line-height:11px;transform:scaleX(1.0299);"><span class="rd b">청 근거규정x-&gt; 법규상 신청권x,</span></div>
<div class="ln" id="L46" style="left:3px;top:173.10px;font-size:11px;line-height:11px;transform:scaleX(1.0215);">도지사는 개인 신청 구애됨 없이 문화재 보존 공익 견지에서 객관적</div>
<div class="ln" id="L47" style="left:3px;top:189.90px;font-size:11px;line-height:11px;transform:scaleX(1.0217);">지정해제사유 판정-&gt; 개인이 문화재지정처분으로 불이익 있어도 조</div>
<div class="ln" id="L48" style="left:3px;top:206.60px;font-size:11px;line-height:11px;">리상 신청권x</div>
</div>
<div class="a" style="left:727px;top:601px;width:344px;height:96px;overflow:hidden">
<div class="ln" id="L49" style="left:3px;top:20.50px;font-size:15px;line-height:15px;transform:scaleX(1.0296);"><span class="rd b" style="font-size:15px;">O필요적)</span></div>
<div class="ln" id="L50" style="left:3px;top:45.60px;font-size:14px;line-height:14px;transform:scaleX(1.0416);"><span class="b" style="font-size:14px;">-국가공무원-국가공무원법</span><span style="font-size:10px;"> 16조 1항으로 76조 </span><span class="rd b u" style="font-size:11px;">소청심사위원</span></div>
<div class="ln" id="L51" style="left:3px;top:63.90px;font-size:11px;line-height:11px;transform:scaleX(1.0176);"><span class="rd b u">회 심사결정 반드시 거쳐야!</span></div>
</div>
<div class="a" style="left:727px;top:698px;width:344px;height:276px;overflow:hidden">
<div class="ln" id="L52" style="left:3px;top:172.10px;font-size:11px;line-height:11px;transform:scaleX(1.0119);"><span class="b u">원고적격o)매몰후보지 근처 주민.</span></div>
<div class="ln" id="L53" style="left:3px;top:188.70px;font-size:11px;line-height:11px;transform:scaleX(1.0113);">수원지와 30m이상 떨어진곳은 아니나, 주민이 집단적으로 거주하는</div>
<div class="ln" id="L54" style="left:3px;top:205.60px;font-size:11px;line-height:11px;transform:scaleX(1.0222);">지역 인접한 곳이므로 법률상 이익o.</div>
</div>
<div class="a" style="left:1072px;top:259px;width:369px;height:341px;overflow:hidden">
<div class="ln" id="L55" style="left:4px;top:141.30px;font-size:11px;line-height:11px;transform:scaleX(0.9509);"><span style="font-size:11px;color:#4848FF">대상적격o)</span><span class="b" style="font-size:15px;">문화재지정처분 </span><span class="u b" style="font-size:15px;">토지 소유자</span><span class="b" style="font-size:15px;">에 대한 거부회신</span></div>
<div class="ln" id="L56" style="left:4px;top:158.10px;font-size:11px;line-height:11px;transform:scaleX(1.0203);">판&gt;문화재보호법 27조 3항 2호는 <span class="u">그 적정여부 검토에서 보호구역 지정이</span></div>
<div class="ln" id="L57" style="left:4px;top:174.90px;font-size:11px;line-height:11px;transform:scaleX(1.0273);"><span class="u">재산권 행사에 미치는 영향 고려</span>-&gt; <span class="bl b u">토지소유자는 지정해제 요구할 법규상</span></div>
<div class="ln" id="L58" style="left:4px;top:192.30px;font-size:11px;line-height:11px;transform:scaleX(1.0164);"><span class="bl b u">또는 조리상 신청권o</span></div>
</div>
<div class="a" style="left:1072px;top:601px;width:369px;height:96px;overflow:hidden">
<div class="ln" id="L59" style="left:4px;top:2.10px;font-size:14px;line-height:14px;transform:scaleX(1.0438);"><span class="b u" style="font-size:14px;">소청심사기각결정 대상</span><span style="font-size:10px;">으로 취소소송 가능</span></div>
<div class="ln" id="L60" style="left:4px;top:24.40px;font-size:14px;line-height:14px;transform:scaleX(1.0703);"><span class="b u" style="font-size:14px;">단, 재결 자체에 고유 위법</span><span style="font-size:10px;"> 있음을 이유로 하는 경우 한하여</span><span class="bl u" style="font-size:11px;"> 재결</span></div>
<div class="ln" id="L61" style="left:4px;top:51.40px;font-size:11px;line-height:11px;transform:scaleX(0.9773);"><span class="bl u b" style="font-size:12px;">대상 취소可</span><span style="font-size:11px;">(행소법 19조 단서). 기각결정에 </span><span class="u" style="font-size:19px;">위원회 구성상 흠</span></div>
<div class="ln" id="L62" style="left:4px;top:78.40px;font-size:11px;line-height:11px;transform:scaleX(0.9573);"><span class="u" style="font-size:19px;">결, 진술 기회 미부여 등</span><span class="bl b" style="font-size:12px;">-&gt;재결 자체 고유한 위법o</span></div>
</div>
<div class="a" style="left:1072px;top:698px;width:369px;height:276px;overflow:hidden">
<div class="ln" id="L63" style="left:4px;top:172.45px;font-size:11px;line-height:11px;transform:scaleX(1.0217);"><span style="font-size:10px;">원고적격x)</span><span class="b" style="font-size:14px;">수녀원</span></div>
<div class="ln" id="L64" style="left:4px;top:190.60px;font-size:11px;line-height:11px;transform:scaleX(1.0135);"><span class="rd">자연인x. 쾌적한 환경에서 생활할 수 있는 이익 향수할 주체x. 재산적 침해</span></div>
<div class="ln" id="L65" style="left:4px;top:207.50px;font-size:11px;line-height:11px;"><span class="rd">우려 증명도x</span></div>
</div>
<div class="a" style="left:1442px;top:259px;width:392px;height:341px;overflow:hidden">
<div class="ln" id="L66" style="left:4px;top:131.70px;font-size:11px;line-height:11px;transform:scaleX(0.9525);"><span style="font-size:11px;">대상적격o)</span><span class="b" style="font-size:15px;">도로점용허가 거부</span></div>
<div class="ln" id="L67" style="left:4px;top:148.70px;font-size:11px;line-height:11px;transform:scaleX(1.0067);">1)<span class="b u">신청한 행위</span>인 도로점용허가는 <span class="bl">강학상 특허</span></div>
<div class="ln" id="L68" style="left:4px;top:165.90px;font-size:11px;line-height:11px;transform:scaleX(1.0235);">2)<span class="bl u">신청 거부시 도로 이용할 수 없게 되어 주유소 영업 중대한 불이익</span></div>
<div class="ln" id="L69" style="left:4px;top:182.40px;font-size:11px;line-height:11px;transform:scaleX(1.0166);"><span class="b">3)도로법 시행령은 </span><span class="u">도로점용 신청 영업으로 주유소 </span>들고 잇으므로 <span class="bl b">도로점용신</span></div>
<div class="ln" id="L70" style="left:4px;top:199.90px;font-size:11px;line-height:11px;transform:scaleX(0.9831);"><span class="bl b">청권o</span></div>
</div>
<div class="a" style="left:1442px;top:698px;width:392px;height:276px;overflow:hidden">
<div class="ln" id="L71" style="left:4px;top:124.35px;font-size:14px;line-height:14px;transform:scaleX(1.0175);"><span class="bl u">원고적격o)고시 취소소송-제약회사 갑</span></div>
<div class="ln" id="L72" style="left:4px;top:143.40px;font-size:11px;line-height:11px;transform:scaleX(1.0107);">고시로 a약품이 요양급여대상에서 삭제시 국민건강보험가입자가 전액 자기부</div>
<div class="ln" id="L73" style="left:4px;top:160.40px;font-size:11px;line-height:11px;transform:scaleX(1.0156);">담으로 해야하고, 요양기관이 요양급여 청구해도 거부될 것이므로 결국<span class="bl u"> a약품</span></div>
<div class="ln" id="L74" style="left:4px;top:176.90px;font-size:11px;line-height:11px;transform:scaleX(1.0213);"><span class="bl u">판매 저하 우려, 제약회사 갑 직접적인 영업이익 감소 우려</span></div>
<div class="ln" id="L75" style="left:4px;top:216.85px;font-size:14px;line-height:14px;transform:scaleX(1.0102);"><span class="rd u">원고적격x)고시 취소소송-대한제약회사협회</span></div>
<div class="ln" id="L76" style="left:4px;top:235.90px;font-size:11px;line-height:11px;transform:scaleX(1.0334);">제약회사<span class="rd u"> 회원으로 둘뿐 직접 의약품 제조나 판매 업 x-</span>&gt; 영업이익 감소 같은</div>
<div class="ln" id="L77" style="left:4px;top:253.40px;font-size:11px;line-height:11px;transform:scaleX(1.0248);"><span class="rd">직접적 불이익x-</span>&gt; 고시 취소 법률상이익x</div>
</div>
<div class="a" style="left:1835px;top:259px;width:59px;height:341px;overflow:hidden">
<div class="ln" id="L78" style="left:3px;top:138.90px;font-size:11px;line-height:11px;">대상적격o)조례에</div>
<div class="ln" id="L79" style="left:3px;top:156.30px;font-size:14px;line-height:14px;"><span class="b" style="font-size:14px;">정신청 거부</span></div>
<div class="ln" id="L80" style="left:3px;top:176.30px;font-size:12px;line-height:12px;">기업도시개발</div>
<div class="ln" id="L81" style="left:3px;top:193.80px;font-size:12px;line-height:12px;"><span class="bl">규상 신청권</span></div>
</div>
<div class="a" style="left:1835px;top:698px;width:59px;height:276px;overflow:hidden">
<div class="ln" id="L82" style="left:3px;top:91.60px;font-size:14px;line-height:14px;"><span class="b">원고적격</span></div>
<div class="ln" id="L83" style="left:3px;top:111.90px;font-size:11px;line-height:11px;">경업자소송.</div>
<div class="ln" id="L84" style="left:3px;top:128.40px;font-size:11px;line-height:11px;">와 수송력 공급</div>
<div class="ln" id="L85" style="left:3px;top:144.90px;font-size:11px;line-height:11px;">에 과당경쟁</div>
<div class="ln" id="L86" style="left:3px;top:161.90px;font-size:11px;line-height:11px;">이익x 법에</div>
<div class="ln" id="L87" style="left:3px;top:178.90px;font-size:11px;line-height:11px;">판&gt; <span class="u">기존업자</span></div>
<div class="ln" id="L88" style="left:3px;top:195.90px;font-size:11px;line-height:11px;"><span class="u">이익</span></div>
<div class="ln" id="L89" style="left:3px;top:231.60px;font-size:14px;line-height:14px;"><span class="b">원고적격</span></div>
<div class="ln" id="L90" style="left:3px;top:251.90px;font-size:11px;line-height:11px;">경업자소송.</div>
<div class="ln" id="L91" style="left:3px;top:268.90px;font-size:11px;line-height:11px;">과다시 허가</div>
</div>
<div class="a" style="left:286px;top:257px;width:442px;height:345px;border:2px solid #0F6B37"></div>
<div class="a" style="left:723px;top:597px;width:7px;height:7px;background:#0F6B37;border:1px solid #fff"></div>
<div class="a" style="left:0px;top:974px;width:1920px;height:29px;background:#E6E6E6"></div>
<div class="a" style="left:0px;top:974px;width:1920px;height:1px;background:#C6C6C6"></div>
<div class="a" style="left:103px;top:974px;width:81px;height:27px;background:#fff;border-left:1px solid #C6C6C6;border-right:1px solid #C6C6C6"></div>
<div class="a" style="left:103px;top:997px;width:81px;height:3px;background:#217346"></div>
<div class="a nw" style="left:103px;width:81px;text-align:center;top:978px;font-size:15px;line-height:18px;color:#217346">Sheet1</div>
<div class="a nw" style="left:184px;width:76px;text-align:center;top:978px;font-size:15px;line-height:18px;color:#444">Sheet2</div>
<div class="a" style="left:260px;top:979px;width:1px;height:19px;background:#999"></div>
<div class="a" style="left:1167px;top:978px;width:728px;height:20px;background:#DADADA"></div>
<div class="a" style="left:1167px;top:978px;width:19px;height:20px;background:#fff;border:1px solid #C6C6C6"></div>
<div class="a" style="left:1186px;top:978px;width:345px;height:20px;background:#fff;border:1px solid #ABABAB"></div>
<div class="a" style="left:1876px;top:978px;width:19px;height:20px;background:#fff;border:1px solid #C6C6C6"></div>
<div class="a" style="left:1898px;top:246px;width:19px;height:728px;background:#DADADA"></div>
<div class="a" style="left:1898px;top:246px;width:19px;height:19px;background:#fff;border:1px solid #C6C6C6"></div>
<div class="a" style="left:1898px;top:566px;width:19px;height:108px;background:#fff;border:1px solid #ABABAB"></div>
<div class="a" style="left:1898px;top:955px;width:19px;height:19px;background:#fff;border:1px solid #C6C6C6"></div>
<div class="a" style="left:0px;top:1003px;width:1920px;height:27px;background:#F3F3F3"></div>
<div class="a" style="left:0px;top:1003px;width:1920px;height:1px;background:#D5D5D5"></div>
<div class="a nw" style="left:7px;top:1006px;font-size:15px;line-height:18px;color:#444;">준비</div>
<div class="a" style="left:1580px;top:1003px;width:41px;height:27px;background:#D2D2D2"></div>
<div class="a nw" style="left:1876px;top:1007px;font-size:15px;line-height:18px;color:#444;">60 %</div>
<svg class="i" style="left:0;top:0" width="1920" height="1080"><path d="M33 983 L28 988 L33 993 Z" fill="#C0C0C0"/><path d="M57 983 L62 988 L57 993 Z" fill="#A0A0A0"/><circle cx="304" cy="988.5" r="9" fill="none" stroke="#777" stroke-width="1.2"/><path d="M304 983 V994 M298.5 988.5 H309.5" stroke="#777" stroke-width="1.6"/><rect x="1149" y="981" width="3" height="3" fill="#999"/><rect x="1149" y="986" width="3" height="3" fill="#999"/><rect x="1149" y="991" width="3" height="3" fill="#999"/><path d="M1179 983 L1174 988 L1179 993 Z" fill="#444"/><path d="M1883 983 L1888 988 L1883 993 Z" fill="#444"/><path d="M1903 259 L1912 259 L1907.5 254 Z" fill="#666"/><path d="M1903 961 L1912 961 L1907.5 966 Z" fill="#666"/><rect x="1591.5" y="1009.5" width="15" height="13" fill="none" stroke="#666"/><path d="M1591.5 1013.5 H1606.5 M1591.5 1017.5 H1606.5 M1596.5 1009.5 V1022.5 M1601.5 1009.5 V1022.5" stroke="#666"/><rect x="1633.5" y="1009.5" width="15" height="13" fill="none" stroke="#666"/><rect x="1636.5" y="1012.5" width="9" height="7" fill="none" stroke="#666"/><path d="M1638 1015 H1644 M1638 1017 H1644" stroke="#666"/><rect x="1673.5" y="1009.5" width="15" height="13" fill="none" stroke="#666"/><path d="M1678.5 1009.5 V1015.5 H1683.5 V1009.5" fill="none" stroke="#666"/><path d="M1707 1016.5 H1716" stroke="#555" stroke-width="2"/><path d="M1722 1016.5 H1845" stroke="#AAA"/><rect x="1754" y="1009" width="5" height="15" fill="#555"/><path d="M1782.5 1013 V1020" stroke="#AAA"/><path d="M1849 1016.5 H1861 M1855 1010.5 V1022.5" stroke="#555" stroke-width="2"/></svg>
<div class="a" style="left:0px;top:1030px;width:1920px;height:50px;background:linear-gradient(90deg,#233A44 0%,#20354A 45%,#1C2B42 100%)"></div>
<div class="a" style="left:60px;top:1030px;width:360px;height:50px;background:#F0F0F0;border-top:1px solid #C8C8C8"></div>
<div class="a" style="left:551px;top:1077px;width:51px;height:3px;background:#76B9ED"></div>
<div class="a" style="left:737px;top:1077px;width:51px;height:3px;background:#76B9ED"></div>
<div class="a" style="left:861px;top:1077px;width:51px;height:3px;background:#76B9ED"></div>
<div class="a" style="left:918px;top:1030px;width:61px;height:50px;background:#9E5F2E"></div>
<div class="a" style="left:975px;top:1030px;width:4px;height:50px;background:#B0692F"></div>
<div class="a" style="left:918px;top:1077px;width:61px;height:3px;background:#FF8A1F"></div>
<div class="a" style="left:979px;top:1030px;width:62px;height:50px;background:#3E505B"></div>
<div class="a" style="left:983px;top:1077px;width:58px;height:3px;background:#76B9ED"></div>
<div class="a nw" style="left:1340px;top:1043px;font-size:18px;line-height:22px;color:#fff">33°C &nbsp;대체로 화창</div>
<div class="a nw" style="left:1693px;top:1041px;font-size:26px;line-height:28px;color:#fff">A</div>
<div class="a nw" style="left:1758px;width:100px;text-align:center;top:1034px;font-size:15px;line-height:18px;color:#fff">오후 5:26</div>
<div class="a nw" style="left:1758px;width:100px;text-align:center;top:1057px;font-size:15px;line-height:18px;color:#fff">2023-07-01</div>
<div class="a" style="left:1913px;top:1030px;width:1px;height:50px;background:#555"></div>
<svg class="i" style="left:0;top:0" width="1920" height="1080"><path d="M20 1047 L28.5 1045.8 V1054.3 H20 Z M30 1045.6 L40 1044 V1054.3 H30 Z M20 1055.7 H28.5 V1064.2 L20 1063 Z M30 1055.7 H40 V1066 L30 1064.4 Z" fill="#fff"/><circle cx="86.5" cy="1051" r="6" fill="none" stroke="#222" stroke-width="1.5"/><path d="M82 1056 L75.5 1063" stroke="#222" stroke-width="1.6"/><path d="M320 1080 L420 1066 V1080 Z" fill="#C8C8C8"/><circle cx="350" cy="1064" r="13" fill="none" stroke="#3E3C6E" stroke-width="2.5"/><circle cx="390" cy="1062" r="13" fill="none" stroke="#3E3C6E" stroke-width="2.5"/><path d="M350 1064 L357 1048 L376 1050 L390 1062 M357 1048 L372 1064 L376 1050 M372 1064 L350 1064 M376 1050 L378 1042 M374 1042 H382 M347 1044 H356 M355 1044 L357 1048" fill="none" stroke="#F06A7A" stroke-width="2.4"/><path d="M441 1045 V1048 H455 V1045 M441.5 1049.5 H454.5 V1056.5 H441.5 Z M441 1062 V1059 H455 V1062 M458.5 1045 V1062" fill="none" stroke="#fff" stroke-width="1.2"/><rect x="457" y="1050" width="3" height="3" fill="#fff"/><path d="M562 1044 H572 L574 1046 H590 V1064 H562 Z" fill="#F8C844"/><rect x="562" y="1049" width="28" height="15" fill="#FFD65C"/><path d="M570 1057 H582 V1066 H578 V1061 H574 V1066 H570 Z" fill="#2A7FD4"/><rect x="623" y="1045" width="29" height="24" rx="3" fill="#F2F2F2"/><path d="M631 1045 V1041 H644 V1045" fill="none" stroke="#2A9BE8" stroke-width="2"/><rect x="632" y="1050" width="5" height="5" fill="#F25022"/><rect x="638" y="1050" width="5" height="5" fill="#7FBA00"/><rect x="632" y="1056" width="5" height="5" fill="#00A4EF"/><rect x="638" y="1056" width="5" height="5" fill="#FFB900"/><path d="M690 1055 H711 A11 11 0 1 0 708 1063" fill="none" stroke="#3FC0F0" stroke-width="5"/><ellipse cx="700" cy="1054.5" rx="19" ry="5.5" transform="rotate(-42 700 1054.5)" fill="none" stroke="#F2B900" stroke-width="2.2"/><defs><linearGradient id="eg" x1="0" y1="0" x2="1" y2="0.6"><stop offset="0" stop-color="#1AA0E0"/><stop offset="1" stop-color="#6AE04A"/></linearGradient></defs><circle cx="762" cy="1055" r="15" fill="url(#eg)"/><path d="M747 1056 C748 1046 768 1044 770 1054 C766 1050 758 1050 757 1058 C756 1066 766 1070 774 1066 C768 1072 748 1072 747 1056 Z" fill="#1878CC"/><circle cx="764" cy="1055.5" r="4.2" fill="#22384A"/><path d="M808 1049 L824 1040 L840 1049 V1069 H808 Z" fill="#1565C0"/><rect x="808" y="1049" width="32" height="20" fill="#2D9CEB"/><path d="M808 1049 L824 1060 L840 1049" fill="#FFFFFF"/><rect x="873" y="1041" width="27" height="28" fill="none" stroke="#2DA5F0" stroke-width="2.5"/><text x="878" y="1064" font-size="18" fill="#2DA5F0">흔</text><rect x="933" y="1040" width="30" height="30" rx="3" fill="#FFE812"/><ellipse cx="948" cy="1054" rx="12" ry="8" fill="#3C1E1E"/><text x="939" y="1058" font-family="Liberation Sans" font-size="8" font-weight="bold" fill="#FFE812">TALK</text><rect x="1003" y="1042" width="19" height="26" fill="#fff" stroke="#1D6F42"/><path d="M1008 1042 V1068 M1013 1042 V1068 M1003 1048 H1022 M1003 1054 H1022 M1003 1060 H1022" stroke="#1D6F42" stroke-width="0.8"/><path d="M995 1044 L1011 1041 V1069 L995 1066 Z" fill="#1D6F42"/><text x="998" y="1061" font-family="Liberation Sans" font-size="12" font-weight="bold" fill="#fff">X</text><circle cx="1316" cy="1055" r="12" fill="#F5A623"/><ellipse cx="1322" cy="1060" rx="9" ry="5" fill="#DDE6F2"/><path d="M1516 1058 L1523 1051 L1530 1058" fill="none" stroke="#fff" stroke-width="1.4"/><rect x="1548.5" y="1048.5" width="10" height="13" rx="3" fill="none" stroke="#fff"/><path d="M1558 1052 L1562 1050 V1060 L1558 1058" fill="none" stroke="#fff"/><path d="M1577 1062 L1590 1049" stroke="#8BC34A" stroke-width="7" stroke-linecap="round"/><path d="M1577 1062 L1583 1056" stroke="#eee" stroke-width="7" stroke-linecap="round"/><rect x="1606.5" y="1050.5" width="16" height="10" fill="none" stroke="#fff"/><rect x="1608" y="1052" width="6" height="7" fill="#fff"/><path d="M1604 1049 V1053" stroke="#fff"/><path d="M1637 1062 A14 14 0 0 1 1651 1048 M1641 1062 A10 10 0 0 1 1651 1052 M1645 1062 A6 6 0 0 1 1651 1056" fill="none" stroke="#fff" stroke-width="1.3"/><circle cx="1650" cy="1061" r="1.5" fill="#fff"/><path d="M1664 1052 H1667 L1672 1048 V1062 L1667 1058 H1664 Z" fill="none" stroke="#fff"/><path d="M1675 1052 L1681 1058 M1681 1052 L1675 1058" stroke="#fff" stroke-width="1.2"/><rect x="1730" y="1045" width="18" height="20" fill="#fff"/><path d="M1869 1045 H1889 V1060 H1876 L1871 1065 V1060 H1869 Z" fill="#fff"/><path d="M1873 1050 H1885 M1873 1054 H1885" stroke="#333"/><circle cx="1888" cy="1065" r="8" fill="#333" stroke="#888"/><text x="1884" y="1070" font-size="12" font-weight="bold" fill="#fff" font-family="Liberation Sans">2</text></svg>
<div class="a nw" style="left:1730px;top:1046px;width:18px;text-align:center;font-size:15px;line-height:18px;color:#000">한</div>
<div class="a nw" style="left:111px;top:1043.0px;font-size:19px;line-height:19px;color:#222;">찾기</div>
</body></html>
